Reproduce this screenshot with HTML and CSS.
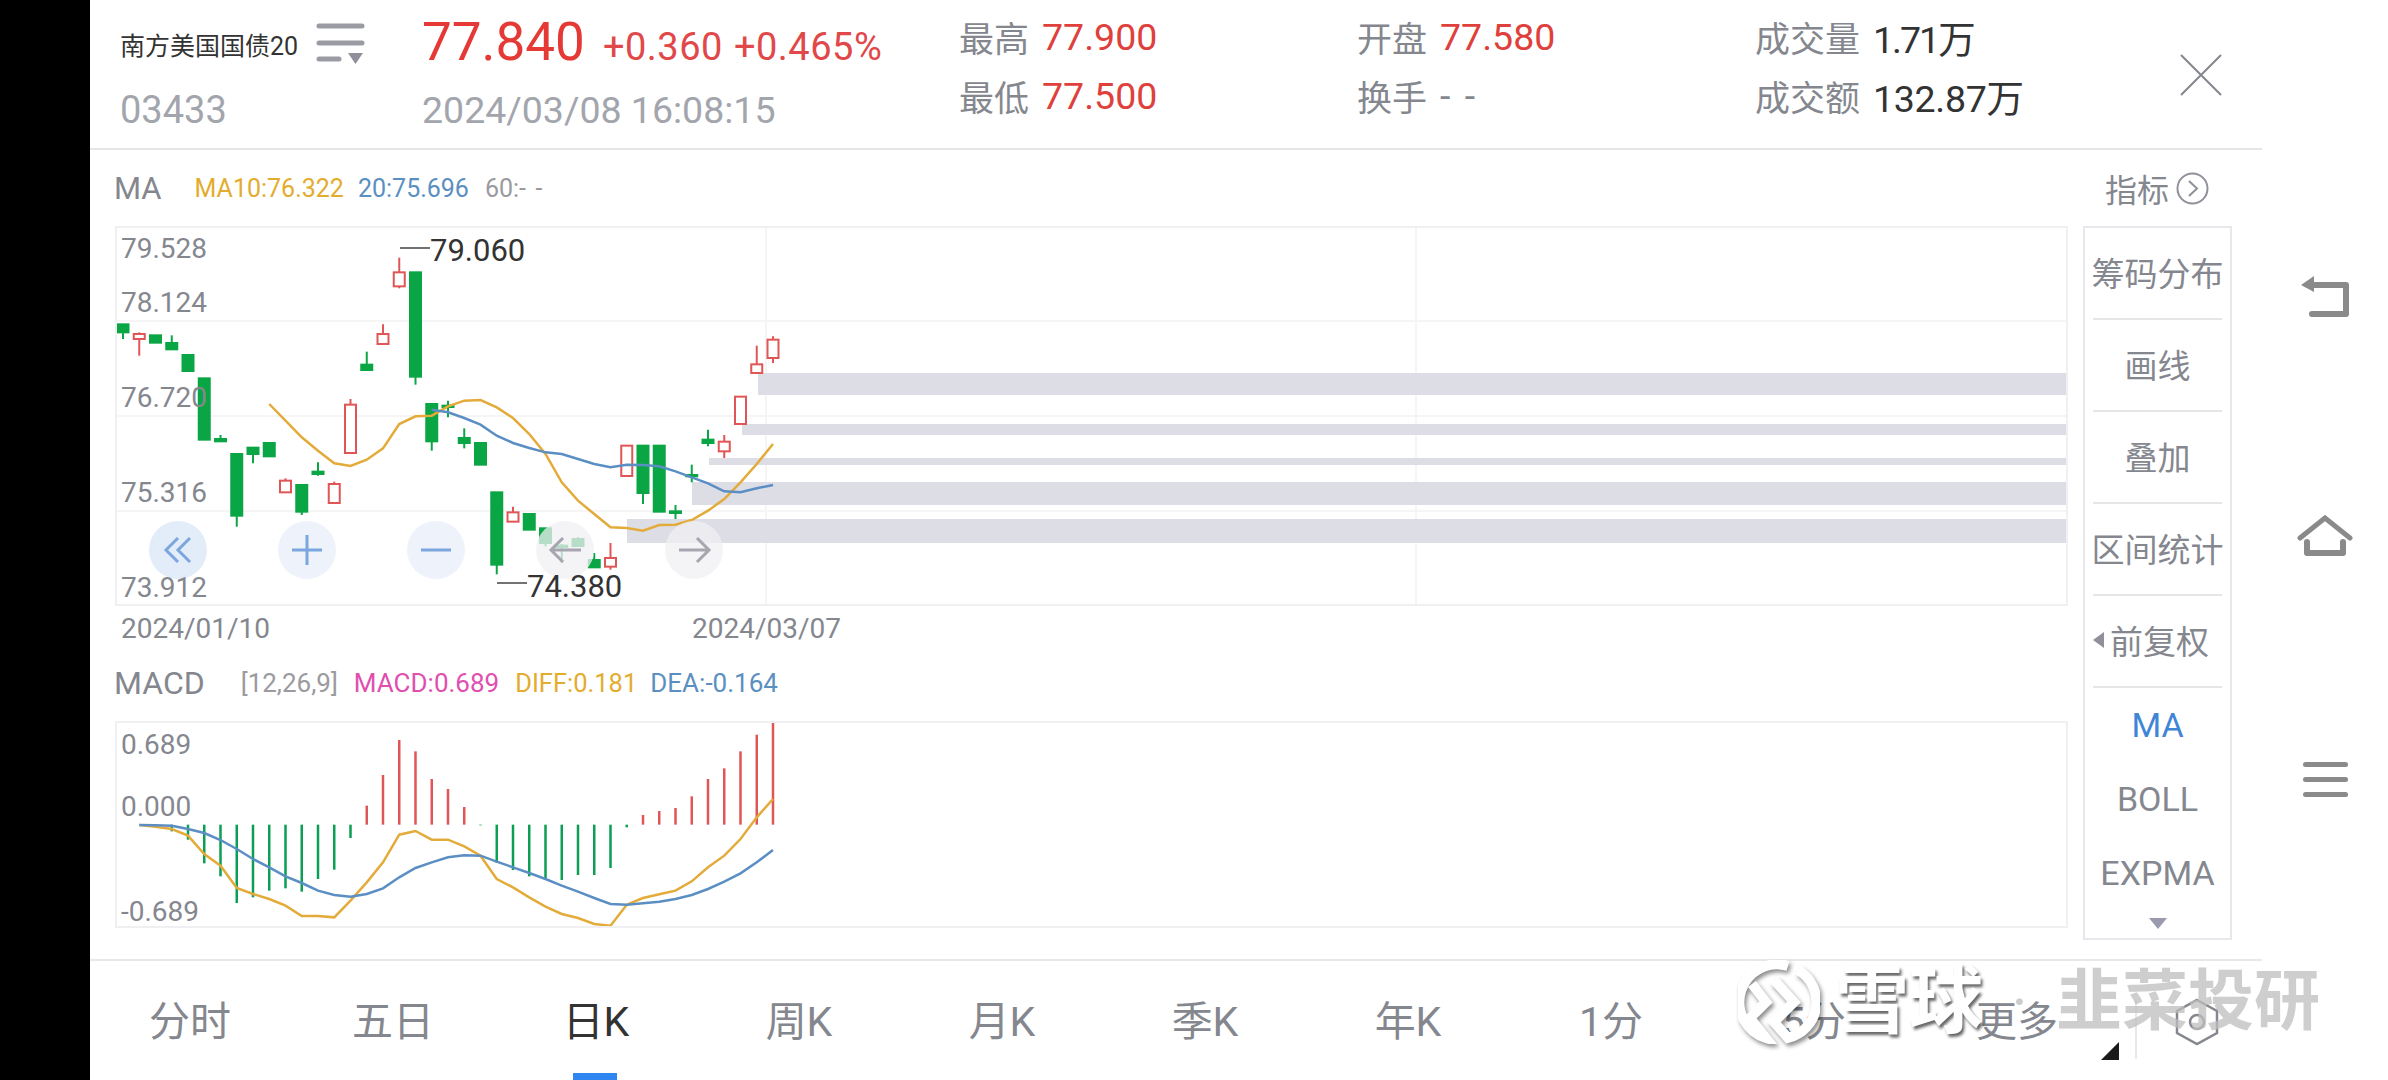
FILE: index.html

```html
<!DOCTYPE html>
<html lang="zh-CN">
<head>
  <meta charset="UTF-8" />
  <title>南方美国国债20</title>
  <link rel="stylesheet" href="styles.css">
</head>
<body>
  <div class="edge"></div>

  <div class="main">
    <div class="header">
      <div class="brand">
        <div class="name-row">
          <span class="name">南方美国国债20</span>
          <svg class="list-icon" width="46" height="40" viewBox="0 0 46 40">
            <path d="M2 3H45M2 20H45M2 36H22" stroke="#9a9ba3" stroke-width="5" stroke-linecap="round" fill="none" />
            <path d="M31 30H46L38.500 41Z" fill="#8f909a" />
          </svg>
        </div>
        <div class="code">03433</div>
      </div>
      <div class="quote">
        <div class="price-row">
          <span class="price">77.840</span>
          <span class="change">+0.360</span>
          <span class="change">+0.465%</span>
        </div>
        <div class="time">2024/03/08 16:08:15</div>
      </div>
      <div class="stat stat-open">
        <div class="stat-line"><span>最高</span><b class="up">77.900</b></div>
        <div class="stat-line"><span>最低</span><b class="up">77.500</b></div>
      </div>
      <div class="stat stat-open">
        <div class="stat-line"><span>开盘</span><b class="up">77.580</b></div>
        <div class="stat-line"><span>换手</span><b class="dashes">--</b></div>
      </div>
      <div class="stat stat-vol">
        <div class="stat-line"><span>成交量</span><b class="dark tight">1.71万</b></div>
        <div class="stat-line"><span>成交额</span><b class="dark">132.87万</b></div>
      </div>
      <svg class="close" width="42" height="42" viewBox="0 0 42 42">
        <path d="M1 1L41 41M41 1L1 41" stroke="#85878f" stroke-width="2" fill="none" />
      </svg>
    </div>

    <div class="legend-row">
      <span class="legend-title">MA</span>
      <span class="legend legend-ma10">MA10:76.322</span>
      <span class="legend legend-ma20">20:75.696</span>
      <span class="legend legend-ma60">60:<span class="dashes">--</span></span>
      <span class="indicator">指标
        <svg width="33" height="33" viewBox="0 0 33 33">
          <circle cx="16.500" cy="16.500" r="15" stroke="#8f9199" stroke-width="2" fill="none" />
          <path d="M13 9L21 16.500L13 24" stroke="#8f9199" stroke-width="2" fill="none" />
        </svg>
      </span>
    </div>

    <div class="workspace">
      <div class="charts">
        <svg class="kline" width="1953" height="380" viewBox="115 227 1953 380">
          <g class="grid-lines">
            <path d="M115 322H2068M115 417H2068M115 512H2068M766 227V607M1416 227V607" />
          </g>
          <g class="zones">
            <rect x="758" y="374" width="1310" height="22" />
            <rect x="742" y="425" width="1326" height="11" />
            <rect x="709" y="459" width="1359" height="7" />
            <rect x="692" y="483" width="1376" height="23" />
            <rect x="627" y="520" width="1441" height="24" />
          </g>
          <g id="candles"></g>
          <g id="ma-lines"></g>
          <g class="chart-btn">
            <circle class="btn-first" cx="178" cy="551" r="29" />
            <path d="M178 539L166 551L178 563M190 539L178 551L190 563" />
          </g>
          <g class="chart-btn">
            <circle class="btn-zoom" cx="307" cy="551" r="29" />
            <path d="M292 551H322M307 536V566" />
          </g>
          <g class="chart-btn">
            <circle class="btn-zoom" cx="436" cy="551" r="29" />
            <path d="M421 551H451" />
          </g>
          <g class="chart-btn btn-muted">
            <circle cx="565" cy="551" r="29" />
            <path d="M581 551H551M563 539L551 551L563 563" />
          </g>
          <g class="chart-btn btn-muted">
            <circle cx="694" cy="551" r="29" />
            <path d="M679 551H709M697 539L709 551L697 563" />
          </g>
          <g class="axis-text">
            <text x="121" y="259">79.528</text>
            <text x="121" y="313">78.124</text>
            <text x="121" y="408">76.720</text>
            <text x="121" y="503">75.316</text>
            <text x="121" y="598">73.912</text>
          </g>
          <g class="extreme">
            <path d="M400 249H430M497 584H527" />
            <text x="430" y="262">79.060</text>
            <text x="527" y="598">74.380</text>
          </g>
        </svg>

        <div class="dates">
          <span class="date-start">2024/01/10</span>
          <span class="date-end">2024/03/07</span>
        </div>

        <div class="macd-legend">
          <span class="legend-title">MACD</span>
          <span class="legend legend-params">[12,26,9]</span>
          <span class="legend legend-macd">MACD:0.689</span>
          <span class="legend legend-diff">DIFF:0.181</span>
          <span class="legend legend-dea">DEA:-0.164</span>
        </div>

        <svg class="macd" width="1953" height="207" viewBox="115 722 1953 207">
          <g id="macd-bars"></g>
          <g id="macd-lines"></g>
          <g class="axis-text">
            <text x="121" y="755">0.689</text>
            <text x="121" y="817">0.000</text>
            <text x="121" y="922">-0.689</text>
          </g>
        </svg>
      </div>

      <div class="side">
        <div class="side-item">筹码分布</div>
        <div class="side-item">画线</div>
        <div class="side-item">叠加</div>
        <div class="side-item">区间统计</div>
        <div class="side-item side-adjust">前复权</div>
        <div class="side-index active">MA</div>
        <div class="side-index">BOLL</div>
        <div class="side-index">EXPMA</div>
        <div class="side-more"></div>
      </div>
    </div>

    <div class="tabs">
      <div class="tab">分时</div>
      <div class="tab">五日</div>
      <div class="tab active">日K</div>
      <div class="tab">周K</div>
      <div class="tab">月K</div>
      <div class="tab">季K</div>
      <div class="tab">年K</div>
      <div class="tab">1分</div>
      <div class="tab">5分</div>
      <div class="tab tab-more">更多</div>
      <div class="tab tab-gear">
        <svg width="44" height="48" viewBox="0 0 44 48">
          <path d="M22 2L42 13V35L22 46L2 35V13Z" stroke="#85878f" stroke-width="2.500" fill="none" />
          <circle cx="22" cy="24" r="7" stroke="#85878f" stroke-width="2.500" fill="none" />
        </svg>
      </div>
    </div>
  </div>

  <div class="nav">
    <svg width="48" height="41" viewBox="0 0 48 41">
      <path d="M13 9H45V38H11" stroke="#8a8a8a" stroke-width="6" stroke-linejoin="round" stroke-linecap="round" fill="none" />
      <path d="M0 9L13 0V16Z" fill="#8a8a8a" />
    </svg>
    <svg width="56" height="42" viewBox="0 0 56 42">
      <path d="M3 23L28 3L53 23" stroke="#8a8a8a" stroke-width="5" stroke-linecap="round" fill="none" />
      <path d="M10 27V38H46V27" stroke="#8a8a8a" stroke-width="6" stroke-linecap="round" stroke-linejoin="round" fill="none" />
    </svg>
    <div class="menu-icon"><i></i><i></i><i></i></div>
  </div>

  <div class="watermark">
    <svg class="mark-logo" width="82" height="84" viewBox="0 0 82 84">
      <path d="M50 6A37 37 0 1 0 28 78L12 58L28 42L14 24" stroke="#fff" stroke-width="10" fill="none" />
      <path d="M60 10A37 37 0 0 1 50 78L36 62L56 42L36 20" stroke="#fff" stroke-width="10" fill="none" />
    </svg>
    <span class="mark-xq">雪球</span>
    <span class="mark-dot">·</span>
    <span class="mark-name">韭菜投研</span>
  </div>

  <svg class="corner" width="18" height="18" viewBox="0 0 18 18"><path d="M18 0V18H0Z" fill="#1a1a1a" /></svg>

  <script src="chart.js"></script>
</body>
</html>
```

FILE: styles.css

```css
* {
  box-sizing: border-box;
}

html, body {
  margin: 0;
  height: 100%;
}

body {
  position: relative;
  display: flex;
  width: 2388px;
  height: 1080px;
  overflow: hidden;
  background: #fff;
  font-family: Roboto, "Noto Sans CJK SC", sans-serif;
  color: #85878f;
}

.edge {
  width: 90px;
  background: #000;
}

.main {
  display: flex;
  flex-direction: column;
  width: 2172px;
}

/* header */
.header {
  display: flex;
  height: 150px;
  border-bottom: 2px solid #e6e6e8;
}

.brand {
  width: 332px;
  padding-left: 30px;
}

.name-row {
  display: flex;
  align-items: center;
  gap: 19px;
  height: 88px;
}

.name {
  font-size: 25px;
  color: #333;
}

.list-icon {
  overflow: visible;
  margin-top: -2px;
}

.code {
  font-size: 38px;
  line-height: 44px;
  color: #a3a5ad;
}

.quote {
  width: 537px;
}

.price-row {
  display: flex;
  align-items: baseline;
  gap: 11px;
  height: 88px;
  padding-top: 6px;
  color: #e0484a;
}

.price {
  margin-right: 7px;
  font-size: 53px;
  line-height: 72px;
  color: #e53935;
}

.change {
  font-size: 38px;
  letter-spacing: 0.500px;
}

.time {
  font-size: 37.500px;
  line-height: 44px;
  color: #a3a5ad;
}

.stat {
  padding-top: 7px;
}

.stat-open {
  width: 398px;
}

.stat-vol {
  width: 425px;
}

.stat-line {
  display: flex;
  align-items: center;
  gap: 13px;
  height: 59px;
  font-size: 35px;
}

.stat-line b {
  font-size: 37.500px;
  font-weight: 400;
}

.up {
  color: #e0403c;
}

.dark {
  color: #333;
  letter-spacing: -0.300px;
}

.dark.tight {
  letter-spacing: -2px;
}

.dashes {
  letter-spacing: 0.380em;
}

.close {
  margin-top: 54px;
}

/* legend rows */
.legend-row {
  display: flex;
  align-items: center;
  height: 76px;
  padding: 0 53px 0 24px;
}

.legend-title {
  margin-right: 33px;
  font-size: 31px;
  color: #85878f;
}

.legend {
  margin-right: 14px;
  font-size: 25px;
}

.legend-ma10, .legend-diff {
  color: #e3ac2e;
}

.legend-ma20, .legend-dea {
  color: #5a8fc0;
}

.legend-ma60, .legend-params {
  color: #9a9a9f;
}

.legend-ma20 {
  margin-right: 16px;
}

.legend-macd {
  color: #e04fb0;
}

.indicator {
  display: flex;
  align-items: center;
  gap: 7px;
  margin-left: auto;
  font-size: 32px;
}

/* charts */
.workspace {
  display: flex;
  gap: 15px;
  padding-left: 25px;
}

.charts {
  width: 1953px;
}

.kline, .macd {
  display: block;
  outline: 2px solid #f0f0f2;
  outline-offset: -2px;
  overflow: hidden;
}

.grid-lines path {
  stroke: #f5f5f6;
  stroke-width: 2;
  fill: none;
}

.zones rect {
  fill: #dddde6;
}

.axis-text text {
  font-size: 28px;
  fill: #85878f;
}

.extreme path {
  stroke: #444;
  stroke-width: 1.500;
  fill: none;
}

.extreme text {
  font-size: 31px;
  fill: #333;
}

.chart-btn circle {
  fill: rgba(236, 241, 250, 0.9);
}

.chart-btn .btn-first {
  fill: #e3edf9;
}

.chart-btn path {
  stroke: #7ba6de;
  stroke-width: 3;
  fill: none;
}

.btn-muted circle {
  fill: rgba(240, 240, 243, 0.75);
}

.btn-muted path {
  stroke: #a5a6b0;
}

.dates {
  display: flex;
  justify-content: flex-start;
  height: 53px;
  padding: 6px 0 0 6px;
  font-size: 28px;
  line-height: 34px;
}

.date-start {
  width: 571px;
}

.macd-legend {
  display: flex;
  align-items: center;
  height: 62px;
  padding-bottom: 14px;
  margin-left: -1px;
}

.macd-legend .legend-title {
  font-size: 32px;
  margin-right: 36px;
}

.macd-legend .legend {
  margin-right: 16px;
  font-size: 26px;
}

.macd-legend .legend-diff {
  margin-right: 13px;
  font-size: 25.500px;
}

/* side menu */
.side {
  display: flex;
  flex-direction: column;
  width: 149px;
  height: 714px;
  border: 2px solid #e8e8ec;
}

.side-item {
  display: flex;
  align-items: center;
  justify-content: center;
  flex: none;
  height: 92px;
  margin: 0 8px;
  padding-bottom: 2px;
  border-bottom: 2px solid #e6e6e9;
  font-size: 33px;
  white-space: nowrap;
}

.side-adjust {
  position: relative;
  padding-left: 4px;
}

.side-adjust::before {
  content: "";
  position: absolute;
  left: 0;
  top: 36px;
  border-style: solid;
  border-width: 8px 11px 8px 0;
  border-color: transparent #8f909a transparent transparent;
}

.side-index {
  display: flex;
  align-items: center;
  justify-content: center;
  flex: none;
  height: 74px;
  font-size: 34px;
}

.side-index.active {
  color: #3f86d6;
}

.side-more {
  align-self: center;
  margin-top: 8px;
  border-style: solid;
  border-width: 11px 9px 0;
  border-color: #9a9aae transparent transparent;
}

/* period tabs */
.tabs {
  display: grid;
  grid-template-columns: repeat(10, 203px) 1fr;
  height: 121px;
  margin-top: 19px;
  border-top: 2px solid #e8e8ea;
}

.tab {
  display: flex;
  justify-content: center;
  padding-top: 34px;
  padding-right: 3px;
  position: relative;
  font-size: 41px;
  line-height: 54px;
}

.tab.active {
  color: #333;
}

.tab.active::after {
  content: "";
  position: absolute;
  left: 77px;
  bottom: 0;
  width: 44px;
  height: 7px;
  background: #2f86f0;
}

.tab-gear {
  padding-top: 37px;
  padding-left: 14px;
}

.tab-gear::before {
  content: "";
  position: absolute;
  left: 15px;
  top: 40px;
  width: 2px;
  height: 58px;
  background: #e8e8e8;
}

/* android nav */
.nav {
  display: flex;
  flex-direction: column;
  align-items: center;
  flex: 1;
  padding-top: 276px;
}

.nav svg {
  display: block;
  flex: none;
}

.nav svg + svg {
  margin-top: 198px;
}

.menu-icon {
  display: flex;
  flex-direction: column;
  gap: 10px;
  width: 45px;
  margin-top: 205px;
}

.menu-icon i {
  display: block;
  height: 5px;
  border-radius: 3px;
  background: #8a8a8a;
}

/* overlays on top of the tab bar */
.watermark {
  position: absolute;
  left: 1738px;
  top: 960px;
  display: flex;
  align-items: center;
  height: 84px;
}

.mark-logo {
  filter: drop-shadow(2px 3px 2px rgba(0, 0, 0, 0.45));
}

.mark-xq {
  margin-left: 15px;
  font-size: 74px;
  font-weight: 700;
  line-height: 84px;
  color: #fff;
  text-shadow: 2px 3px 3px rgba(0, 0, 0, 0.6);
}

.mark-dot {
  width: 73px;
  text-align: center;
  font-size: 60px;
  color: #ccc;
}

.mark-name {
  font-size: 66px;
  font-weight: 700;
  line-height: 84px;
  color: rgba(190, 190, 190, 0.75);
}

.corner {
  position: absolute;
  left: 2101px;
  top: 1042px;
}
```

FILE: chart.js

```js
// candle and line values are read off the picture, in thirds of a pixel
const NS = 'http://www.w3.org/2000/svg';
const RED = '#e05656';
const GREEN = '#0aa544';
const YELLOW = '#e3ab3a';
const BLUE = '#5b8fc4';

const slotX = i => 123 + 16.25 * i;
const klineY = v => 220 + v / 3;
const macdY = v => 660 + v / 3;

function add(parent, tag, attrs) {
  const el = document.createElementNS(NS, tag);
  Object.keys(attrs).forEach(k => el.setAttribute(k, attrs[k]));
  parent.appendChild(el);
}

// [colour, body top, body bottom, wick top, wick bottom]
const candles = [
  ['g', 316, 340, 316, 360], ['r', 345, 360, 340, 410], ['g', 349, 371, 349, 371],
  ['g', 372, 391, 349, 391], ['g', 408, 456, 408, 456], ['g', 478, 662, 478, 662],
  ['g', 660, 667, 648, 667], ['g', 705, 890, 705, 923], ['g', 686, 705, 686, 733],
  ['g', 672, 712, 672, 712], ['r', 785, 820, 778, 820], ['g', 798, 878, 798, 888],
  ['g', 758, 765, 730, 770], ['r', 795, 852, 788, 852], ['r', 557, 702, 540, 702],
  ['g', 437, 453, 398, 456], ['r', 345, 375, 316, 375], ['r', 160, 202, 116, 208],
  ['g', 160, 473, 160, 497], ['g', 555, 667, 555, 695], ['g', 560, 564, 545, 595],
  ['g', 657, 672, 628, 688], ['g', 672, 737, 672, 737], ['g', 820, 1037, 820, 1066],
  ['r', 880, 908, 863, 908], ['g', 885, 932, 885, 932], ['g', 928, 972, 928, 982],
  ['g', 980, 984, 975, 1032], ['g', 960, 981, 955, 981], ['g', 1023, 1045, 1002, 1045],
  ['r', 1017, 1043, 972, 1052], ['r', 680, 771, 680, 771], ['g', 680, 822, 680, 855],
  ['g', 680, 878, 680, 878], ['g', 877, 882, 858, 900], ['g', 768, 772, 737, 790],
  ['g', 662, 672, 632, 682], ['r', 668, 697, 648, 717], ['r', 533, 615, 533, 615],
  ['r', 436, 462, 380, 462], ['r', 362, 417, 352, 432]
];

const candleBox = document.getElementById('candles');
candles.forEach((c, i) => {
  const color = c[0] === 'r' ? RED : GREEN;
  const x = slotX(i);
  add(candleBox, 'line', { x1: x, x2: x, y1: klineY(c[3]), y2: klineY(c[4]), stroke: color, 'stroke-width': 2 });
  add(candleBox, 'rect', {
    x: x - 5.5,
    y: klineY(c[1]),
    width: 11,
    height: (c[2] - c[1]) / 3,
    fill: c[0] === 'r' ? '#fff' : GREEN,
    stroke: color,
    'stroke-width': 2
  });
});

function drawLine(box, start, values, toY, color) {
  const points = values.map((v, i) => slotX(start + i) + ',' + toY(v));
  add(box, 'polyline', { points: points.join(' '), fill: 'none', stroke: color, 'stroke-width': 2.5 });
}

const maBox = document.getElementById('ma-lines');
drawLine(maBox, 9, [555, 605, 655, 695, 733, 741, 722, 688, 615, 592, 590, 562, 545, 543, 565, 597, 645, 705,
  790, 845, 885, 925, 927, 935, 918, 917, 903, 875, 840, 790, 735, 675], klineY, YELLOW);
drawLine(maBox, 19, [572, 580, 597, 617, 650, 672, 687, 700, 705, 720, 735, 745, 737, 738, 742, 757, 775, 793,
  817, 820, 808, 798], klineY, BLUE);

// histogram ends, slot 3 onwards; baseline is 497
const bars = [517, 542, 613, 652, 732, 715, 695, 688, 698, 660, 632, 537,
  440, 348, 243, 277, 360, 390, 444, 499,
  612, 633, 652, 660, 663, 648, 648, 627, 505,
  468, 456, 447, 412, 360, 328, 277, 227, 185];

const barBox = document.getElementById('macd-bars');
bars.forEach((v, i) => {
  const x = slotX(i + 3);
  add(barBox, 'line', {
    x1: x,
    x2: x,
    y1: macdY(497),
    y2: macdY(v),
    stroke: v < 497 ? RED : '#0a9f52',
    'stroke-width': 2.5
  });
});

const macdBox = document.getElementById('macd-lines');
drawLine(macdBox, 1, [498, 503, 510, 530, 585, 620, 687, 705, 720, 740, 771, 771, 775, 725, 670, 610, 527, 516, 542, 542,
  562, 590, 660, 685, 715, 743, 765, 777, 795, 800, 737, 717, 706, 695, 667, 625, 590, 540, 475, 420], macdY, YELLOW);
drawLine(macdBox, 1, [498, 499, 500, 510, 522, 543, 570, 600, 625, 652, 672, 695, 708, 713, 705, 688, 655, 627, 610, 595,
  589, 590, 608, 625, 642, 660, 680, 698, 717, 735, 737, 733, 728, 720, 708, 690, 668, 643, 610, 573], macdY, BLUE);
```
